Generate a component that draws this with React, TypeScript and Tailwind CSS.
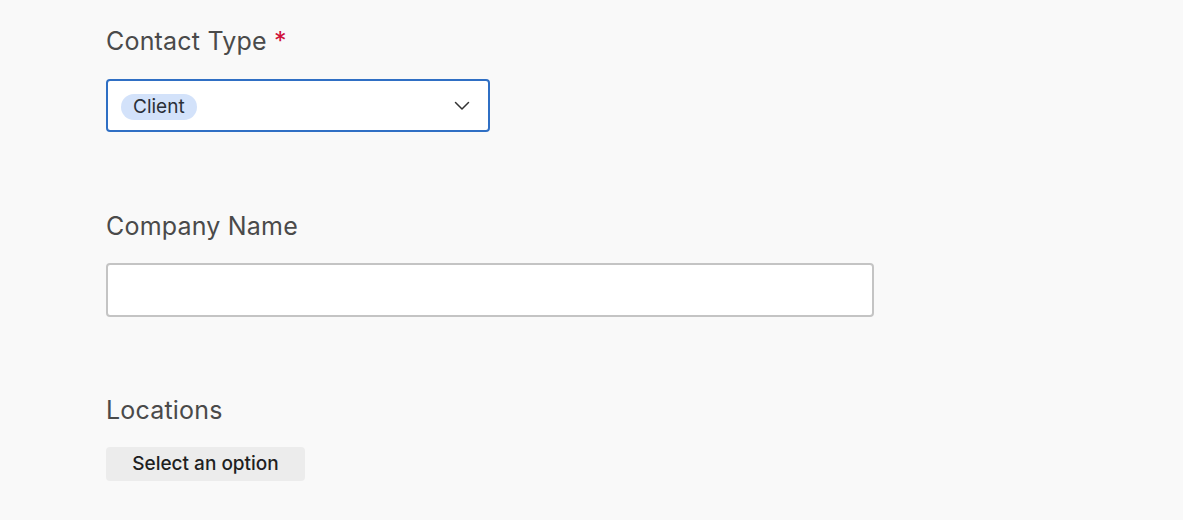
const App = () => {
    return (
        <div className="min-h-[520px] w-full bg-[#f9f9f9] pl-[106px] pt-[25px] font-['Inter',sans-serif]">
            <div className="flex flex-col">
                <label className="h-8 text-[25px] leading-8 tracking-[0.2px] text-[#4a4a4a]">
                    Contact Type <span className="text-[#d0103a]">*</span>
                </label>
                <div className="mt-[22px] flex h-[53px] w-[384px] items-center justify-between rounded-[4px] border-2 border-[#2f6fc4] bg-white pl-[13px] pr-[18px]">
                    <span className="mt-[2px] rounded-full bg-[#d3e2fa] px-[12px] text-[19px] leading-[26px] text-[#2a2f37]">Client</span>
                    <svg width="16" height="10" viewBox="0 0 16 10" fill="none">
                        <path d="M1.5 1.5 L8 8 L14.5 1.5" stroke="#333" strokeWidth="1.5" strokeLinecap="round" strokeLinejoin="round" />
                    </svg>
                </div>

                <label className="mt-[78px] h-8 text-[25px] leading-8 tracking-[0.2px] text-[#4a4a4a]">Company Name</label>
                <input className="mt-[21px] h-[54px] w-[768px] rounded-[4px] border-2 border-[#c4c4c4] bg-white px-3 outline-none" />

                <label className="mt-[77px] h-8 text-[25px] leading-8 tracking-[0.2px] text-[#4a4a4a]">Locations</label>
                <button className="mt-[21px] h-[34px] w-[199px] rounded-[4px] bg-[#ececec] text-[19px] font-medium text-[#1f1f1f]">
                    Select an option
                </button>
            </div>
        </div>
    )
}

export default App
